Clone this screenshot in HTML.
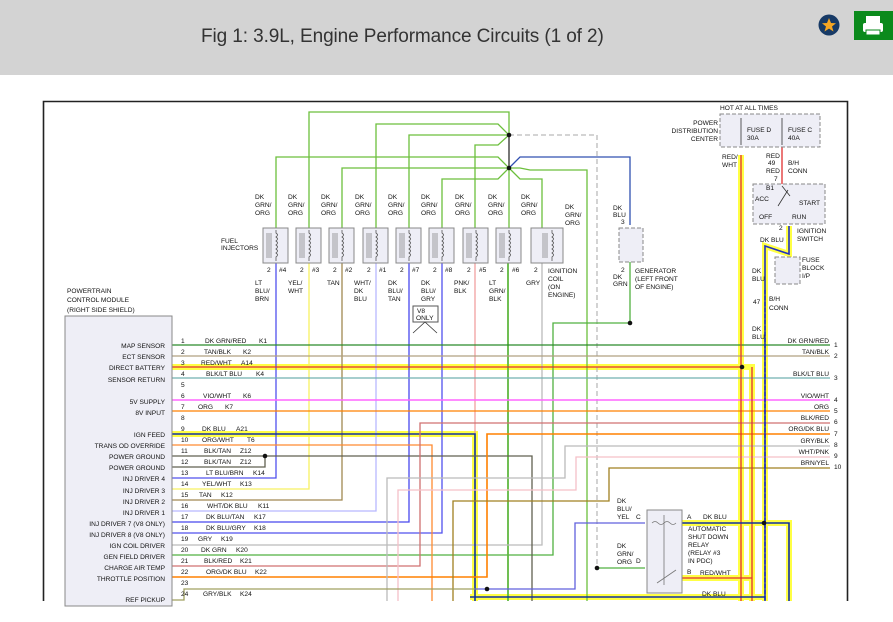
<!DOCTYPE html>
<html><head><meta charset="utf-8"><style>
html,body{margin:0;padding:0;width:893px;height:622px;overflow:hidden;background:#fff;}
#hdr{position:absolute;left:0;top:0;width:893px;height:75px;background:#d3d3d3;}
#title{position:absolute;left:201px;top:26px;font:19px "Liberation Sans",sans-serif;color:#333;letter-spacing:-0.1px;}
svg{position:absolute;left:0;top:0;}
svg text{font-family:"Liberation Sans",sans-serif;font-size:6.6px;fill:#111;}
</style></head><body>
<div id="hdr"></div>
<div id="title">Fig 1: 3.9L, Engine Performance Circuits (1 of 2)</div>
<svg width="893" height="622" viewBox="0 0 893 622">
<defs>
<g id="coil"><path d="M-5 5V30M-3 5V30M-1 5V30" stroke="#777" stroke-width="0.7" fill="none"/><path d="M4 2V5Q7 7 4 9Q7 11 4 13Q7 15 4 17Q7 19 4 21Q7 23 4 25Q7 27 4 29V33" stroke="#555" stroke-width="0.8" fill="none"/></g>
</defs>
<circle cx="829" cy="25" r="10.5" fill="#173a66"/>
<polygon points="829,18 831,23 836,23.3 832,26.5 833.5,31.5 829,28.6 824.5,31.5 826,26.5 822,23.3 827,23" fill="#f5a623"/>
<rect x="854" y="11" width="39" height="29" fill="#0b8a1c"/>
<rect x="866" y="16" width="14" height="7" fill="#fff"/>
<rect x="863" y="23" width="20" height="9" rx="2" fill="#fff"/>
<rect x="866" y="30" width="14" height="5" fill="#fff" stroke="#0b8a1c" stroke-width="1"/>
<path d="M43.5 601V101.5H847.5V601" fill="none" stroke="#222" stroke-width="1.6"/>
<g fill="none" stroke-width="1.3">
<g stroke="#ffff44" stroke-width="6">
<path d="M172 367H742"/><path d="M172 434H475V601"/><path d="M741 155V601"/>
<path d="M789 226V254L765 246V601"/><path d="M682 523H789V601"/><path d="M682 578H752V367"/>
<path d="M470 597H765"/><path d="M742 367H752V601"/>
</g>
<g stroke="#6cbf3c">
<path d="M309 228V112H509V135"/><path d="M376 228V124H498L509 135"/><path d="M409 228V135H509"/>
<path d="M475 228V145H498L509 135"/><path d="M276 228V157H498L509 168"/><path d="M342 228V168H509"/>
<path d="M442 228V179H498L509 168"/><path d="M509 168V228"/><path d="M509 168L520 179H542V228"/>
<path d="M509 168H520L530 170H587V601"/>
</g>
<path d="M509 135V168" stroke="#555" stroke-width="1.6"/>
<path d="M509 135H597V568" stroke="#bbb" stroke-dasharray="5,3"/>
<path d="M509 168L520 157H630V225" stroke="#3050b0"/>
<path d="M630 262V323H553V555H172" stroke="#50b040"/>
<path d="M276 263V478H172" stroke="#5050ee"/>
<path d="M309 263V489H172" stroke="#f8f060"/>
<path d="M342 263V500H172" stroke="#a08850"/>
<path d="M376 263V511H172" stroke="#b8b8ff"/>
<path d="M409 263V522H172" stroke="#4848ee"/>
<path d="M442 263V533H172" stroke="#5050ee"/>
<path d="M475 263V434" stroke="#f0a0a0"/>
<path d="M508 263V601" stroke="#60b840" stroke-width="1.8"/>
<path d="M542 263V545H172" stroke="#bbb"/>
<path d="M172 345H830" stroke="#2a8a2a"/>
<path d="M172 356H830" stroke="#b0a080"/>
<path d="M172 367H742" stroke="#e03030"/>
<path d="M172 378H830" stroke="#70b0b0"/>
<path d="M172 400H830" stroke="#ff66ff" stroke-width="1.6"/>
<path d="M172 411H830" stroke="#ff8000"/>
<path d="M172 434H475V601" stroke="#1030a0" stroke-width="1.6"/>
<path d="M172 445H432V601" stroke="#ff8a30"/>
<path d="M172 456H532V601" stroke="#606050"/>
<path d="M172 467H265V456" stroke="#606050"/>
<path d="M830 423H420V566H172" stroke="#d07070"/>
<path d="M830 434H487V577H172" stroke="#ff8000" stroke-width="1.6"/>
<path d="M830 446H565V478H387V601" stroke="#bbb"/>
<path d="M830 457H576V490H398V601" stroke="#f5c0c8"/>
<path d="M830 468H609V501H453V601" stroke="#a08020"/>
<path d="M172 600H184V589H475" stroke="#a0a060"/>
<path d="M475 589H575V523H645" stroke="#6060dd"/>
<path d="M597 568H645" stroke="#50b040"/>
<path d="M741 155V601" stroke="#e03030"/>
<path d="M752 367V601" stroke="#e03030"/>
<path d="M782 147V186M782 190V222" stroke="#e03030"/>
<path d="M789 226V254L765 246V601" stroke="#2030c0" stroke-width="1.6"/>
<path d="M765 290V601" stroke="#2030c0" stroke-width="1.6" stroke-dasharray="4,2"/>
<path d="M682 523H789V601" stroke="#1030a0" stroke-width="1.6"/>
<path d="M682 578H752" stroke="#e03030"/>
<path d="M470 597H765" stroke="#1030a0" stroke-width="1.6"/>
</g>
<g fill="#eeeef6" stroke="#888" stroke-width="1">
<rect x="65" y="316" width="107" height="290"/>
<rect x="263" y="228" width="25" height="35"/><rect x="296" y="228" width="25" height="35"/>
<rect x="329" y="228" width="25" height="35"/><rect x="363" y="228" width="25" height="35"/>
<rect x="396" y="228" width="25" height="35"/><rect x="429" y="228" width="25" height="35"/>
<rect x="463" y="228" width="25" height="35"/><rect x="496" y="228" width="25" height="35"/>
<rect x="531" y="228" width="32" height="35"/>
<rect x="647" y="510" width="35" height="83"/>
<rect x="619" y="228" width="24" height="34" stroke-dasharray="4,2"/>
<rect x="720" y="114" width="100" height="33" stroke-dasharray="4,2"/>
<rect x="753" y="184" width="72" height="40" stroke-dasharray="4,2"/>
<rect x="775" y="257" width="25" height="27" stroke-dasharray="4,2"/>
</g>
<use href="#coil" x="272" y="228"/><use href="#coil" x="305" y="228"/><use href="#coil" x="338" y="228"/>
<use href="#coil" x="372" y="228"/><use href="#coil" x="405" y="228"/><use href="#coil" x="438" y="228"/>
<use href="#coil" x="472" y="228"/><use href="#coil" x="505" y="228"/><use href="#coil" x="548" y="228"/>
<path d="M652 523Q655 520 658 523Q661 526 664 523Q667 520 670 523Q673 526 676 523M664 515V585M657 583L676 570" stroke="#777" stroke-width="0.8" fill="none"/>
<path d="M741 118V145M782 118V145M782 186L790 196M778 206L788 190" stroke="#333" stroke-width="0.8" fill="none"/>
<rect x="413" y="306" width="25" height="16" fill="#fff" stroke="#555"/>
<path d="M425 322L413 333M425 322L437 333" stroke="#333" stroke-width="0.8"/>
<g fill="#111">
<circle cx="509" cy="135" r="2.3"/><circle cx="509" cy="168" r="2.3"/><circle cx="630" cy="323" r="2.3"/>
<circle cx="265" cy="456" r="2.3"/><circle cx="742" cy="367" r="2.3"/><circle cx="764" cy="523" r="2.3"/>
<circle cx="597" cy="568" r="2.3"/><circle cx="487" cy="589" r="2.3"/>
</g>
<g>
<text x="255" y="199">DK</text><text x="255" y="207">GRN/</text><text x="255" y="215">ORG</text>
<text x="288" y="199">DK</text><text x="288" y="207">GRN/</text><text x="288" y="215">ORG</text>
<text x="321" y="199">DK</text><text x="321" y="207">GRN/</text><text x="321" y="215">ORG</text>
<text x="355" y="199">DK</text><text x="355" y="207">GRN/</text><text x="355" y="215">ORG</text>
<text x="388" y="199">DK</text><text x="388" y="207">GRN/</text><text x="388" y="215">ORG</text>
<text x="421" y="199">DK</text><text x="421" y="207">GRN/</text><text x="421" y="215">ORG</text>
<text x="455" y="199">DK</text><text x="455" y="207">GRN/</text><text x="455" y="215">ORG</text>
<text x="488" y="199">DK</text><text x="488" y="207">GRN/</text><text x="488" y="215">ORG</text>
<text x="521" y="199">DK</text><text x="521" y="207">GRN/</text><text x="521" y="215">ORG</text>
<text x="565" y="209">DK</text><text x="565" y="217">GRN/</text><text x="565" y="225">ORG</text>
<text x="221" y="243">FUEL</text><text x="221" y="250">INJECTORS</text>
<text x="267" y="272">2</text><text x="279" y="272">#4</text><text x="300" y="272">2</text><text x="312" y="272">#3</text>
<text x="333" y="272">2</text><text x="345" y="272">#2</text><text x="367" y="272">2</text><text x="379" y="272">#1</text>
<text x="400" y="272">2</text><text x="412" y="272">#7</text><text x="433" y="272">2</text><text x="445" y="272">#8</text>
<text x="467" y="272">2</text><text x="479" y="272">#5</text><text x="500" y="272">2</text><text x="512" y="272">#6</text>
<text x="534" y="272">2</text>
<text x="255" y="285">LT</text><text x="255" y="293">BLU/</text><text x="255" y="301">BRN</text>
<text x="288" y="285">YEL/</text><text x="288" y="293">WHT</text>
<text x="327" y="285">TAN</text>
<text x="354" y="285">WHT/</text><text x="354" y="293">DK</text><text x="354" y="301">BLU</text>
<text x="388" y="285">DK</text><text x="388" y="293">BLU/</text><text x="388" y="301">TAN</text>
<text x="421" y="285">DK</text><text x="421" y="293">BLU/</text><text x="421" y="301">GRY</text>
<text x="454" y="285">PNK/</text><text x="454" y="293">BLK</text>
<text x="489" y="285">LT</text><text x="489" y="293">GRN/</text><text x="489" y="301">BLK</text>
<text x="526" y="285">GRY</text>
<text x="548" y="273">IGNITION</text><text x="548" y="281">COIL</text><text x="548" y="289">(ON</text><text x="548" y="297">ENGINE)</text>
<text x="417" y="313">V8</text><text x="416" y="320">ONLY</text>
<text x="613" y="210">DK</text><text x="613" y="217">BLU</text><text x="621" y="224">3</text>
<text x="621" y="272">2</text><text x="613" y="279">DK</text><text x="613" y="286">GRN</text>
<text x="635" y="273">GENERATOR</text><text x="635" y="281">(LEFT FRONT</text><text x="635" y="289">OF ENGINE)</text>
<text x="720" y="110">HOT AT ALL TIMES</text>
<text x="718" y="125" text-anchor="end">POWER</text><text x="718" y="133" text-anchor="end">DISTRIBUTION</text><text x="718" y="141" text-anchor="end">CENTER</text>
<text x="747" y="132">FUSE D</text><text x="747" y="140">30A</text><text x="788" y="132">FUSE C</text><text x="788" y="140">40A</text>
<text x="722" y="159">RED/</text><text x="722" y="167">WHT</text>
<text x="766" y="158">RED</text><text x="768" y="165">49</text><text x="788" y="165">B/H</text><text x="766" y="173">RED</text><text x="788" y="173">CONN</text><text x="774" y="181">7</text>
<text x="766" y="190">B1</text><text x="755" y="201">ACC</text><text x="799" y="205">START</text><text x="759" y="219">OFF</text><text x="792" y="219">RUN</text>
<text x="779" y="230">2</text><text x="797" y="233">IGNITION</text><text x="797" y="241">SWITCH</text>
<text x="760" y="242">DK BLU</text>
<text x="802" y="262">FUSE</text><text x="802" y="270">BLOCK</text><text x="802" y="278">I/P</text>
<text x="752" y="273">DK</text><text x="752" y="281">BLU</text>
<text x="753" y="304">47</text><text x="769" y="301">B/H</text><text x="769" y="310">CONN</text>
<text x="752" y="331">DK</text><text x="752" y="339">BLU</text>
<text x="67" y="293">POWERTRAIN</text><text x="67" y="302">CONTROL MODULE</text><text x="67" y="312">(RIGHT SIDE SHIELD)</text>
</g>
<g text-anchor="end">
<text x="165" y="348">MAP SENSOR</text><text x="165" y="359">ECT SENSOR</text><text x="165" y="370">DIRECT BATTERY</text>
<text x="165" y="382">SENSOR RETURN</text><text x="165" y="404">5V SUPPLY</text><text x="165" y="415">8V INPUT</text>
<text x="165" y="437">IGN FEED</text><text x="165" y="448">TRANS OD OVERRIDE</text><text x="165" y="459">POWER GROUND</text>
<text x="165" y="470">POWER GROUND</text><text x="165" y="481">INJ DRIVER 4</text><text x="165" y="493">INJ DRIVER 3</text>
<text x="165" y="504">INJ DRIVER 2</text><text x="165" y="515">INJ DRIVER 1</text><text x="165" y="526">INJ DRIVER 7 (V8 ONLY)</text>
<text x="165" y="537">INJ DRIVER 8 (V8 ONLY)</text><text x="165" y="548">IGN COIL DRIVER</text><text x="165" y="559">GEN FIELD DRIVER</text>
<text x="165" y="570">CHARGE AIR TEMP</text><text x="165" y="581">THROTTLE POSITION</text><text x="165" y="602">REF PICKUP</text>
</g>
<g>
<text x="181" y="343">1</text><text x="205" y="343">DK GRN/RED</text><text x="259" y="343">K1</text>
<text x="181" y="354">2</text><text x="204" y="354">TAN/BLK</text><text x="243" y="354">K2</text>
<text x="181" y="365">3</text><text x="201" y="365">RED/WHT</text><text x="241" y="365">A14</text>
<text x="181" y="376">4</text><text x="206" y="376">BLK/LT BLU</text><text x="256" y="376">K4</text>
<text x="181" y="387">5</text>
<text x="181" y="398">6</text><text x="203" y="398">VIO/WHT</text><text x="243" y="398">K6</text>
<text x="181" y="409">7</text><text x="198" y="409">ORG</text><text x="225" y="409">K7</text>
<text x="181" y="420">8</text>
<text x="181" y="431">9</text><text x="202" y="431">DK BLU</text><text x="236" y="431">A21</text>
<text x="181" y="442">10</text><text x="202" y="442">ORG/WHT</text><text x="247" y="442">T6</text>
<text x="181" y="453">11</text><text x="204" y="453">BLK/TAN</text><text x="240" y="453">Z12</text>
<text x="181" y="464">12</text><text x="204" y="464">BLK/TAN</text><text x="240" y="464">Z12</text>
<text x="181" y="475">13</text><text x="206" y="475">LT BLU/BRN</text><text x="253" y="475">K14</text>
<text x="181" y="486">14</text><text x="202" y="486">YEL/WHT</text><text x="240" y="486">K13</text>
<text x="181" y="497">15</text><text x="199" y="497">TAN</text><text x="221" y="497">K12</text>
<text x="181" y="508">16</text><text x="207" y="508">WHT/DK BLU</text><text x="258" y="508">K11</text>
<text x="181" y="519">17</text><text x="206" y="519">DK BLU/TAN</text><text x="254" y="519">K17</text>
<text x="181" y="530">18</text><text x="206" y="530">DK BLU/GRY</text><text x="254" y="530">K18</text>
<text x="181" y="541">19</text><text x="198" y="541">GRY</text><text x="221" y="541">K19</text>
<text x="181" y="552">20</text><text x="201" y="552">DK GRN</text><text x="236" y="552">K20</text>
<text x="181" y="563">21</text><text x="204" y="563">BLK/RED</text><text x="240" y="563">K21</text>
<text x="181" y="574">22</text><text x="206" y="574">ORG/DK BLU</text><text x="255" y="574">K22</text>
<text x="181" y="585">23</text>
<text x="181" y="596">24</text><text x="203" y="596">GRY/BLK</text><text x="240" y="596">K24</text>
</g>
<g text-anchor="end">
<text x="829" y="343">DK GRN/RED</text><text x="829" y="354">TAN/BLK</text><text x="829" y="376">BLK/LT BLU</text>
<text x="829" y="398">VIO/WHT</text><text x="829" y="409">ORG</text><text x="829" y="420">BLK/RED</text>
<text x="829" y="431">ORG/DK BLU</text><text x="829" y="443">GRY/BLK</text><text x="829" y="454">WHT/PNK</text><text x="829" y="465">BRN/YEL</text>
</g>
<g>
<text x="834" y="347">1</text><text x="834" y="358">2</text><text x="834" y="380">3</text><text x="834" y="402">4</text>
<text x="834" y="413">5</text><text x="834" y="424">6</text><text x="834" y="436">7</text><text x="834" y="447">8</text>
<text x="834" y="458">9</text><text x="834" y="469">10</text>
<text x="617" y="503">DK</text><text x="617" y="511">BLU/</text><text x="617" y="519">YEL</text><text x="636" y="519">C</text>
<text x="617" y="548">DK</text><text x="617" y="556">GRN/</text><text x="617" y="564">ORG</text><text x="636" y="563">D</text>
<text x="687" y="519">A</text><text x="703" y="519">DK BLU</text>
<text x="688" y="531">AUTOMATIC</text><text x="688" y="539">SHUT DOWN</text><text x="688" y="547">RELAY</text>
<text x="688" y="555">(RELAY #3</text><text x="688" y="563">IN PDC)</text>
<text x="687" y="574">B</text><text x="700" y="575">RED/WHT</text>
<text x="702" y="596">DK BLU</text>
</g>
</svg>
</body></html>
